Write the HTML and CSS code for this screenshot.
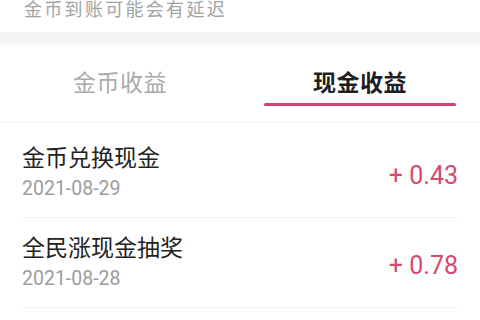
FILE: index.html
```html
<!DOCTYPE html>
<html lang="zh-CN">
<head>
    <meta charset="UTF-8">
    <meta name="viewport" content="width=device-width, initial-scale=1.0">
    <title>现金收益</title>
    <link rel="stylesheet" href="styles.css">
</head>
<body>
    <div class="notice">金币到账可能会有延迟</div>
    <div class="band"></div>

    <nav class="tabs">
        <div class="tab">
            <span class="tab__label">金币收益</span>
        </div>
        <div class="tab tab--active">
            <span class="tab__label">现金收益</span>
            <span class="tab__bar"></span>
        </div>
    </nav>

    <ul class="records">
        <li class="record">
            <div class="record__info">
                <div class="record__title">金币兑换现金</div>
                <div class="record__date">2021-08-29</div>
            </div>
            <div class="record__amount">+ 0.43</div>
        </li>
        <li class="record">
            <div class="record__info">
                <div class="record__title">全民涨现金抽奖</div>
                <div class="record__date">2021-08-28</div>
            </div>
            <div class="record__amount">+ 0.78</div>
        </li>
    </ul>
</body>
</html>
```

FILE: styles.css
```css
body {
    margin: 0;
    background-color: #fff;
    font-family: "Roboto", "Noto Sans CJK SC", sans-serif;
}

.notice {
    height: 32px;
    padding-left: 24px;
    font-size: 18px;
    line-height: 20px;
    letter-spacing: 2.3px;
    color: #a3a3a3;
}

.band {
    height: 15px;
    background: linear-gradient(#f4f4f4 0, #f4f4f4 10px, #fff 15px);
}

.tabs {
    display: flex;
    height: 75px;
    border-bottom: 1px solid #f3f3f3;
}

.tab {
    flex: 1;
    display: flex;
    flex-direction: column;
    align-items: center;
    padding-top: 22px;
}

.tab__label {
    font-size: 23px;
    line-height: 30px;
    color: #aaa;
    letter-spacing: 0.5px;
}

.tab--active .tab__label {
    color: #1f1f1f;
    font-weight: bold;
}

.tab__bar {
    width: 192px;
    height: 3px;
    margin-top: 4px;
    background-color: #d4416a;
    border-radius: 2px;
}

.records {
    list-style: none;
    margin: 0;
    padding: 5px 0 0;
}

.record {
    display: flex;
    align-items: center;
    justify-content: space-between;
    margin: 0 22px;
    padding: 16px 0;
    border-bottom: 1px solid #f3f3f3;
}

.record__title {
    font-size: 23px;
    line-height: 30px;
    color: #222;
}

.record__date {
    margin-top: 3px;
    font-size: 19.5px;
    line-height: 24px;
    color: #9c9c9c;
}

.record__amount {
    padding-top: 5px;
    font-size: 25px;
    color: #d4496f;
}
```
